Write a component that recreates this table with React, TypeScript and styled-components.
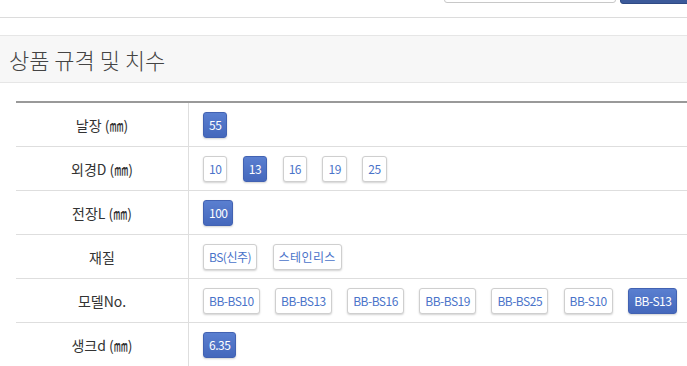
import React from "react";
import styled, { createGlobalStyle } from "styled-components";

const Global = createGlobalStyle`
  html, body { margin: 0; padding: 0; background: #fff; }
  body { font-family: "Noto Sans CJK KR", "Noto Sans", sans-serif; color: #333; overflow: hidden; }
  * { box-sizing: border-box; }
`;

const Page = styled.div`
  width: 687px;
  overflow: hidden;
`;

const TopBar = styled.div`
  height: 18px;
  border-bottom: 1px solid #dcdcdc;
  display: flex;
  justify-content: flex-end;
  align-items: flex-start;
  gap: 4px;
`;

const SearchBox = styled.div`
  width: 172px;
  height: 28px;
  margin-top: -25px;
  border: 1px solid #c8c8c8;
  border-radius: 3px;
  background: #fff;
`;

const SearchButton = styled.div`
  width: 70px;
  height: 28px;
  margin-top: -24px;
  margin-right: -3px;
  border-radius: 3px;
  background: #3c5a9a;
  border: 1px solid #2f4a85;
`;

const TitleBand = styled.div`
  margin-top: 17px;
  height: 48px;
  background: #f7f7f7;
  border-top: 1px solid #e6e6e6;
  border-bottom: 1px solid #e6e6e6;
  display: flex;
  align-items: center;
  padding-left: 9px;
`;

const Title = styled.h2`
  margin: 0;
  font-size: 22px;
  font-weight: 300;
  color: #444;
  letter-spacing: 0;
`;

const Table = styled.div`
  margin: 18px 0 0 16px;
  border-top: 2px solid #999;
`;

const Row = styled.div`
  display: grid;
  grid-template-columns: 173px 1fr;
  border-bottom: 1px solid #dedede;
  height: 44px;
`;

const Label = styled.div`
  border-right: 1px solid #dedede;
  display: flex;
  align-items: center;
  justify-content: center;
  font-size: 14px;
  color: #333;
`;

const Options = styled.div`
  display: flex;
  align-items: center;
  gap: 15.5px;
  padding-left: 14px;
  white-space: nowrap;
`;

const Chip = styled.span<{ $active?: boolean; $wide?: boolean }>`
  flex-shrink: 0;
  display: inline-flex;
  align-items: center;
  height: 26px;
  padding: 0 5px;
  border-radius: 3px;
  font-size: 12px;
  letter-spacing: ${(p) => (p.$wide ? "0.4px" : "-0.5px")};
  white-space: nowrap;
  border: 1px solid ${(p) => (p.$active ? "#4262b2" : "#cfcfcf")};
  background: ${(p) => (p.$active ? "linear-gradient(#5a7fd0, #4568bc)" : "#fff")};
  color: ${(p) => (p.$active ? "#fff" : "#4a73c9")};
  box-shadow: 0 1px 2px rgba(0, 0, 0, 0.18);
`;

type Spec = { label: string; options: string[]; active: string };

const specs: Spec[] = [
  { label: "날장 (㎜)", options: ["55"], active: "55" },
  { label: "외경D (㎜)", options: ["10", "13", "16", "19", "25"], active: "13" },
  { label: "전장L (㎜)", options: ["100"], active: "100" },
  { label: "재질", options: ["BS(신주)", "스테인리스"], active: "" },
  {
    label: "모델No.",
    options: ["BB-BS10", "BB-BS13", "BB-BS16", "BB-BS19", "BB-BS25", "BB-S10", "BB-S13"],
    active: "BB-S13",
  },
  { label: "생크d (㎜)", options: ["6.35"], active: "6.35" },
];

const isHangulOnly = (s: string) => /^[\uac00-\ud7a3]+$/.test(s);

export default function App() {
  return (
    <Page>
      <Global />
      <TopBar>
        <SearchBox />
        <SearchButton />
      </TopBar>
      <TitleBand>
        <Title>상품 규격 및 치수</Title>
      </TitleBand>
      <Table>
        {specs.map((s) => (
          <Row key={s.label}>
            <Label>{s.label}</Label>
            <Options>
              {s.options.map((o) => (
                <Chip key={o} $active={o === s.active} $wide={isHangulOnly(o)}>
                  {o}
                </Chip>
              ))}
            </Options>
          </Row>
        ))}
      </Table>
    </Page>
  );
}
